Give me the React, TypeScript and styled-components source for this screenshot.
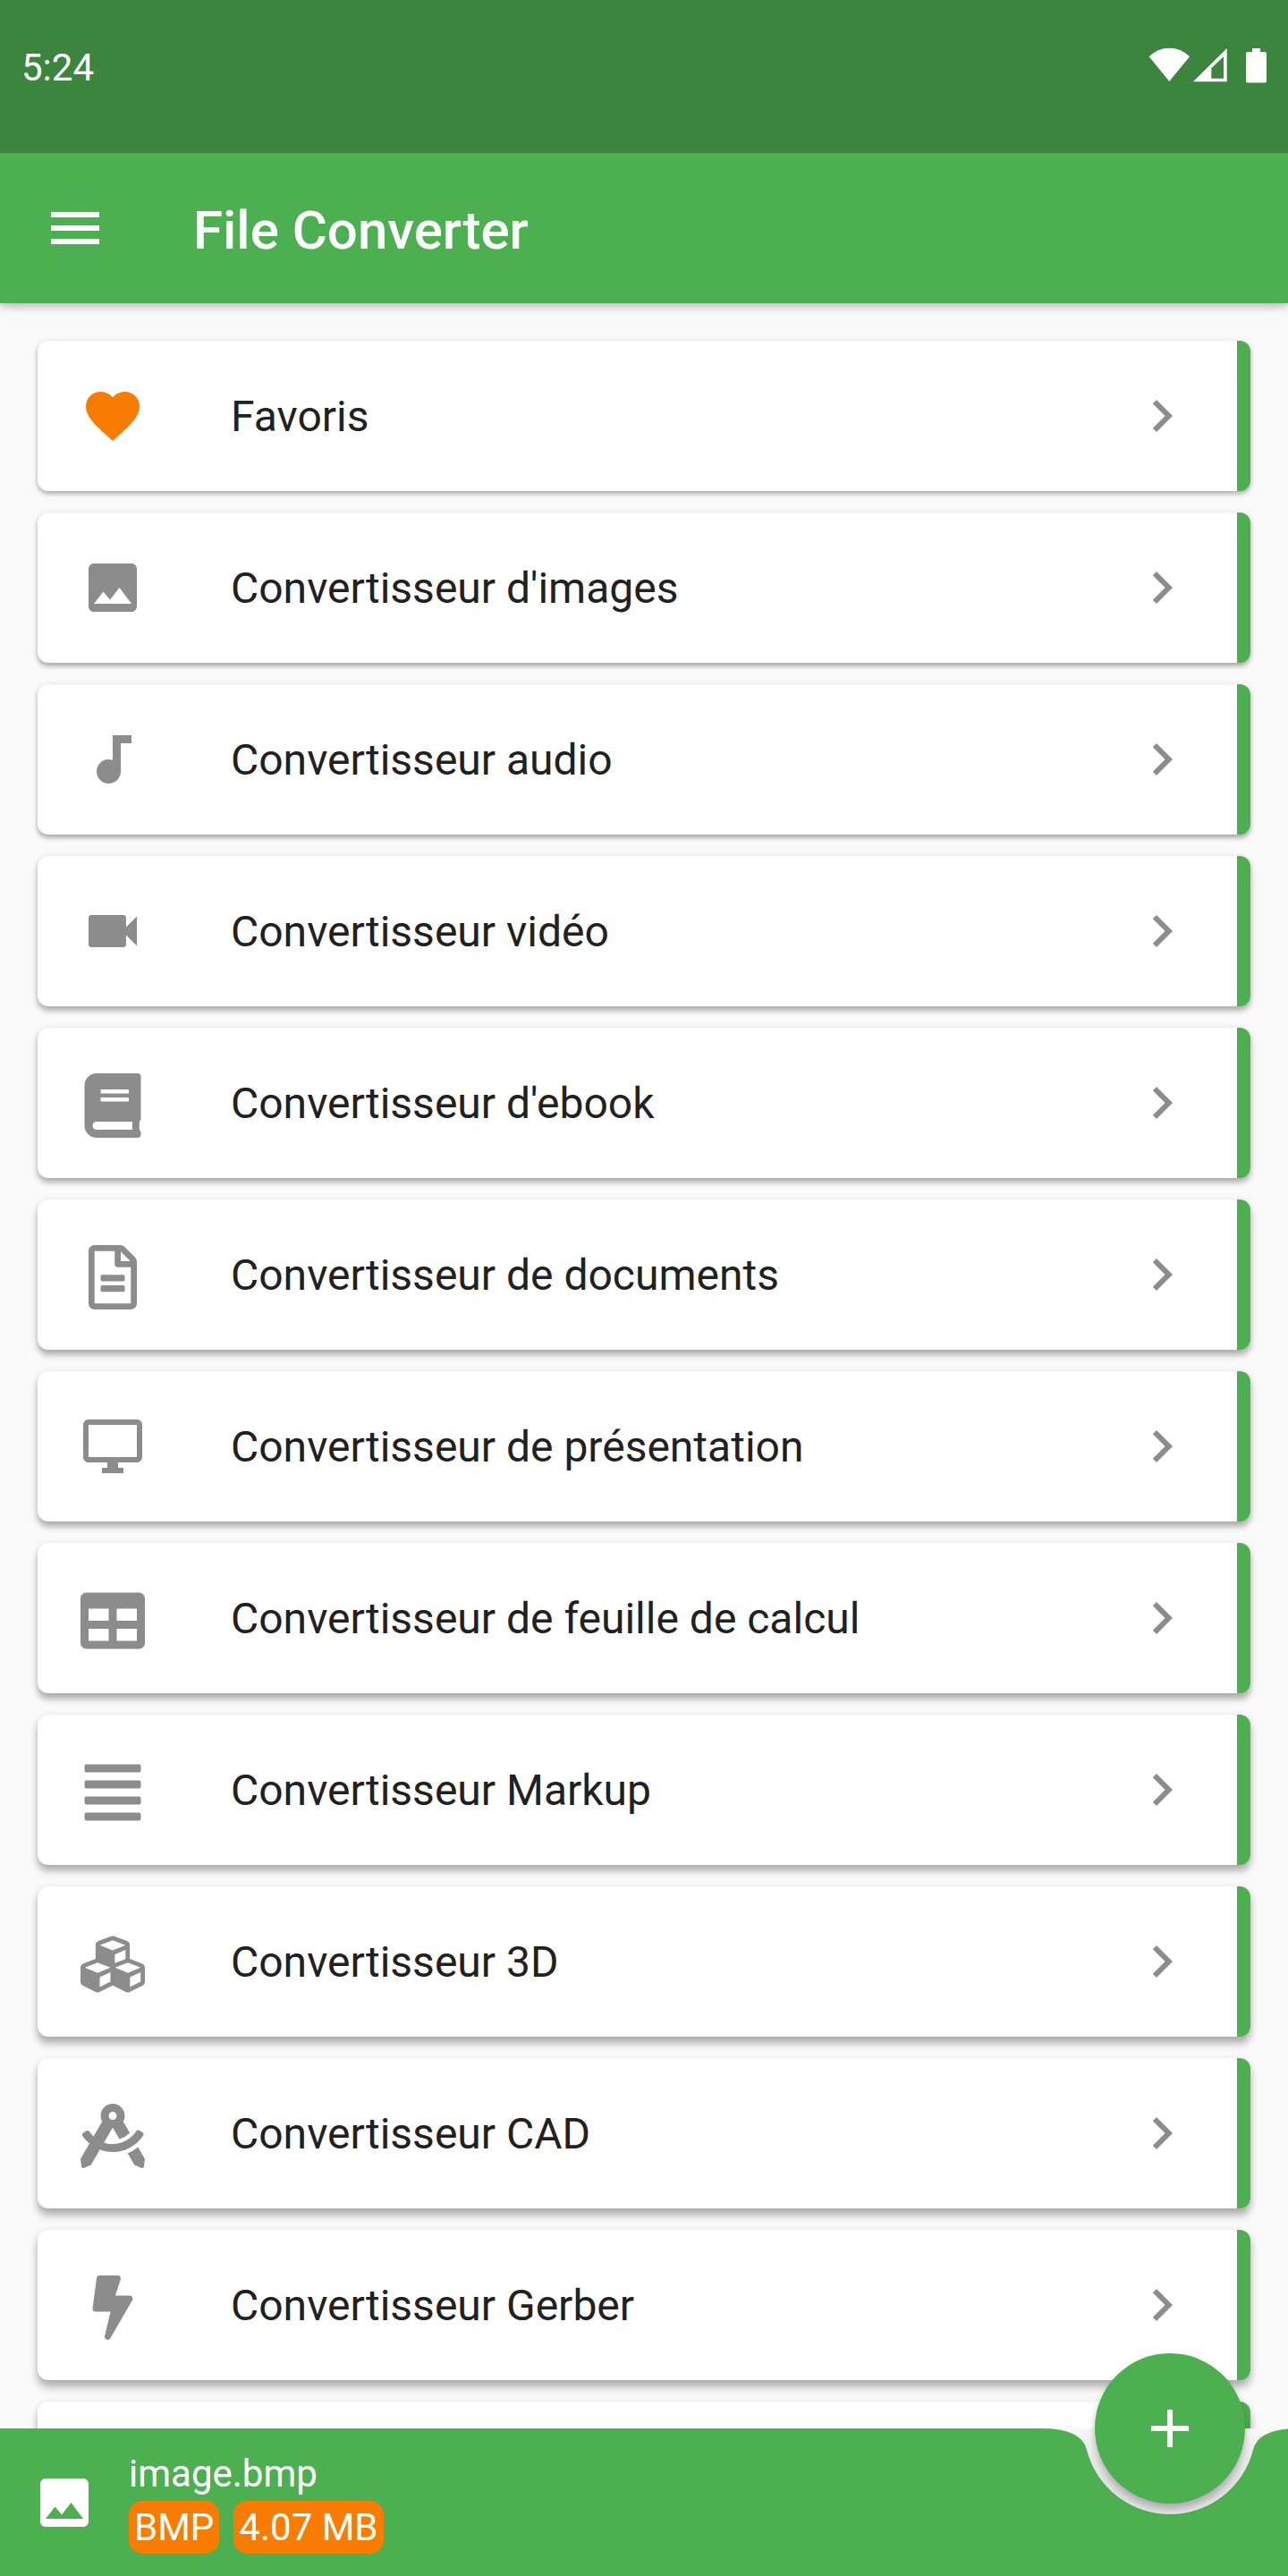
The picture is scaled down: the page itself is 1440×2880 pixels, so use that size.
import React from 'react';
import styled, { createGlobalStyle } from 'styled-components';
import type { IconType } from 'react-icons';
import {
  MdAdd,
  MdAudiotrack,
  MdChevronRight,
  MdFavorite,
  MdImage,
  MdMenu,
  MdOutlineDesktopWindows,
  MdVideocam,
} from 'react-icons/md';
import {
  FaAlignJustify,
  FaBolt,
  FaBook,
  FaCubes,
  FaDraftingCompass,
  FaRegFileAlt,
  FaTable,
} from 'react-icons/fa';

const green = '#4caf50';
const orange = '#f77c00';

const GlobalStyle = createGlobalStyle`
  body {
    margin: 0;
    background: #fafafa;
    font-family: Roboto, 'Liberation Sans', sans-serif;
  }
`;

const Screen = styled.div`
  position: relative;
  display: flex;
  flex-direction: column;
  width: 1440px;
  height: 2880px;
  overflow: hidden;
  background: #fafafa;
`;

const StatusBar = styled.header`
  position: relative;
  z-index: 2;
  box-sizing: border-box;
  display: flex;
  justify-content: space-between;
  align-items: flex-start;
  height: 171px;
  padding: 51px 24px 0;
  background: #3b853e;
  color: #fff;
`;

const Clock = styled.span`
  font-size: 42px;
  line-height: 50px;
`;

const StatusIcons = styled.svg`
  display: block;
  width: 132px;
  height: 42px;
  margin-top: 2px;
`;

const AppBar = styled.nav`
  position: relative;
  z-index: 1;
  box-sizing: border-box;
  display: flex;
  align-items: center;
  gap: 96px;
  height: 168px;
  padding: 0 48px;
  background: ${green};
  color: #fff;
  box-shadow: 0 4px 8px rgba(0, 0, 0, 0.2), 0 2px 18px rgba(0, 0, 0, 0.08);
`;

const Title = styled.h1`
  margin: 0;
  padding-top: 5px;
  font-size: 60px;
  font-weight: 500;
  line-height: 70px;
`;

const List = styled.main`
  flex: 1;
  min-height: 0;
  overflow: hidden;
  display: flex;
  flex-direction: column;
  gap: 24px;
  padding: 42px 42px 0;
`;

const Row = styled.div<{ $depth: number }>`
  flex: none;
  box-sizing: border-box;
  display: flex;
  align-items: center;
  height: 168px;
  padding: 0 48px;
  border-right: 15px solid ${green};
  border-radius: 12px;
  background: #fff;
  box-shadow:
    0 ${(p) => 3 + p.$depth * 0.45}px ${(p) => 5 + p.$depth * 0.4}px rgba(0, 0, 0, 0.28),
    0 1px 8px rgba(0, 0, 0, 0.08);
`;

const Leading = styled.span<{ $color: string; $shift: number }>`
  box-sizing: border-box;
  display: flex;
  justify-content: center;
  width: 72px;
  margin-right: 96px;
  padding-top: ${(p) => p.$shift * 2}px;
  color: ${(p) => p.$color};
`;

const Label = styled.span`
  flex: 1;
  padding-top: 2px;
  font-size: 48px;
  line-height: 56px;
  color: #212121;
`;

const Trailing = styled.span`
  display: flex;
  color: #8c8c8c;
`;

const BarBacking = styled.div`
  flex: none;
  background: linear-gradient(#f8f6f7, #e4e4e4 60px);
`;

const BottomBar = styled.footer`
  box-sizing: border-box;
  display: flex;
  align-items: center;
  gap: 36px;
  height: 165px;
  padding: 0 36px;
  background: ${green};
  color: #fff;
  clip-path: path('M0 0H1164Q1209 0 1214.9 23.45A96 96 0 0 0 1401.1 23.45Q1407 0 1452 0V165H0Z');
`;

const FileInfo = styled.div`
  display: flex;
  flex-direction: column;
  gap: 5px;
`;

const FileName = styled.span`
  font-size: 42px;
  line-height: 50px;
`;

const Tags = styled.div`
  display: flex;
  gap: 16px;
`;

const Tag = styled.span`
  padding: 5px 6px;
  border-radius: 15px;
  background: ${orange};
  font-size: 42px;
  line-height: 49px;
`;

const AddButton = styled.button`
  position: absolute;
  right: 48px;
  bottom: 81px;
  z-index: 2;
  display: flex;
  align-items: center;
  justify-content: center;
  width: 168px;
  height: 168px;
  padding: 0;
  border: 0;
  border-radius: 50%;
  background: ${green};
  color: #fff;
  box-shadow: 0 6px 8px rgba(0, 0, 0, 0.25);
`;

type Entry = { label: string; icon: IconType; color?: string; shift?: number };

const entries: Entry[] = [
  { label: 'Favoris', icon: MdFavorite, color: orange },
  { label: "Convertisseur d'images", icon: MdImage },
  { label: 'Convertisseur audio', icon: MdAudiotrack },
  { label: 'Convertisseur vidéo', icon: MdVideocam },
  { label: "Convertisseur d'ebook", icon: FaBook, shift: 3 },
  { label: 'Convertisseur de documents', icon: FaRegFileAlt, shift: 3 },
  { label: 'Convertisseur de présentation', icon: MdOutlineDesktopWindows },
  { label: 'Convertisseur de feuille de calcul', icon: FaTable, shift: 3 },
  { label: 'Convertisseur Markup', icon: FaAlignJustify, shift: 3 },
  { label: 'Convertisseur 3D', icon: FaCubes, shift: 3 },
  { label: 'Convertisseur CAD', icon: FaDraftingCompass, shift: 3 },
  { label: 'Convertisseur Gerber', icon: FaBolt, shift: 3 },
];

export default function App() {
  return (
    <>
      <GlobalStyle />
      <Screen>
        <StatusBar>
          <Clock>5:24</Clock>
          <StatusIcons viewBox="0 0 132 42" fill="#fff">
            <path d="M.7 10.3Q10 .7 23.3 .7T46 10.3L23.3 38Z" />
            <path fillRule="evenodd" d="M87.7 1V38.3H50ZM84 10.2L70.3 23.3V34.7H84Z" />
            <path d="M116 1h9v4h5q2 0 2 2v30.500q0 2-2 2h-19q-2 0-2-2V7q0-2 2-2h5Z" />
          </StatusIcons>
        </StatusBar>
        <AppBar>
          <MdMenu size={72} />
          <Title>File Converter</Title>
        </AppBar>
        <List>
          {entries.map(({ label, icon: Icon, color = '#8c8c8c', shift = 0 }, i) => (
            <Row key={label} $depth={i}>
              <Leading $color={color} $shift={shift}>
                <Icon size={72} />
              </Leading>
              <Label>{label}</Label>
              <Trailing>
                <MdChevronRight size={72} />
              </Trailing>
            </Row>
          ))}
          <Row $depth={entries.length} />
        </List>
        <BarBacking>
          <BottomBar>
            <MdImage size={72} />
            <FileInfo>
              <FileName>image.bmp</FileName>
              <Tags>
                <Tag>BMP</Tag>
                <Tag>4.07 MB</Tag>
              </Tags>
            </FileInfo>
          </BottomBar>
        </BarBacking>
        <AddButton aria-label="+">
          <MdAdd size={72} />
        </AddButton>
      </Screen>
    </>
  );
}
